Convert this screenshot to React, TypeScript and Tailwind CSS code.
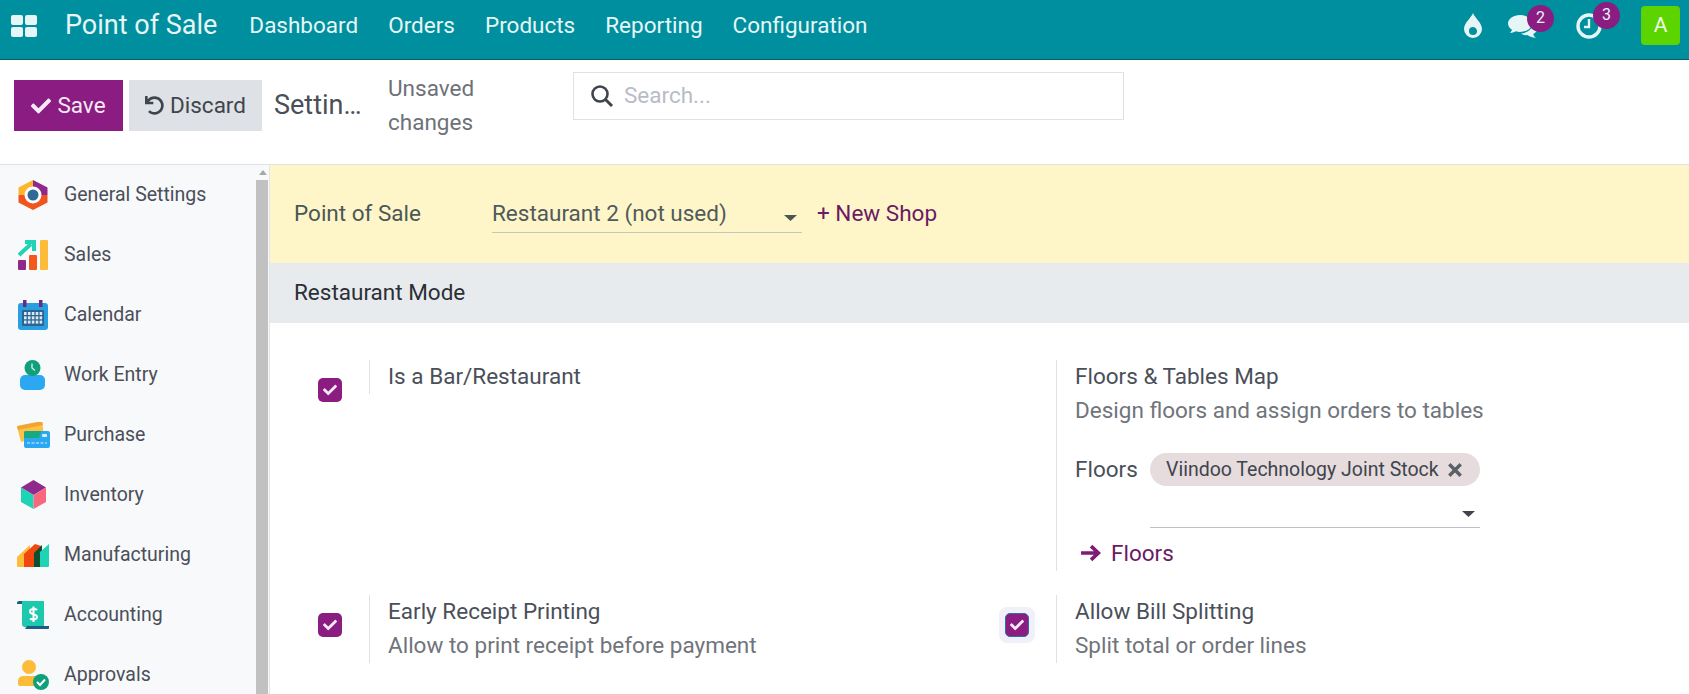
import React from "react";
import { FaCheck } from "react-icons/fa";

const font = { fontFamily: 'Roboto, "Liberation Sans", sans-serif' };

function Hex() {
  return (
    <svg width="30" height="32" viewBox="0 0 30 32">
      <path d="M15 1 L29.5 8.5 L29.5 16 L15 16 Z" fill="#8f2a8c" />
      <path d="M15 1 L0.5 8.5 L0.5 16 L15 16 Z" fill="#fdb72e" />
      <path d="M0.5 16 L0.5 23.5 L15 31 L29.5 23.5 L29.5 16 Z" fill="#f0541f" />
      <circle cx="15" cy="16" r="8.5" fill="#fff" />
      <circle cx="15" cy="16" r="5.5" fill="#2d6a96" />
    </svg>
  );
}
function SalesI() {
  return (
    <svg width="30" height="30" viewBox="0 0 30 30">
      <rect x="0" y="20" width="8" height="10" rx="1" fill="#8f2a8c" />
      <rect x="11" y="15" width="8" height="15" rx="1" fill="#f4581f" />
      <rect x="22" y="0" width="8" height="30" rx="1" fill="#fdbb3a" />
      <path d="M1 15 L13 4" stroke="#1fd3b5" strokeWidth="4" />
      <path d="M7 0 H18 V11 L14 11 V4 H7 Z" fill="#1fd3b5" />
    </svg>
  );
}
function CalI() {
  return (
    <svg width="30" height="30" viewBox="0 0 30 30">
      <rect x="0" y="3" width="30" height="27" rx="3" fill="#2a9fe0" />
      <rect x="4" y="10" width="22" height="16" rx="1" fill="#2a6394" />
      {[0, 1, 2, 3, 4].map((c) =>
        [0, 1, 2].map((r) => <rect key={c + "-" + r} x={6 + c * 3.9} y={12 + r * 4.3} width="2.6" height="3" fill="#dbeaf5" />)
      )}
      <rect x="5" y="0" width="3.5" height="7" fill="#6d2a85" />
      <rect x="21" y="0" width="3.5" height="7" fill="#6d2a85" />
    </svg>
  );
}
function WorkI() {
  return (
    <svg width="26" height="30" viewBox="0 0 26 30">
      <rect x="0" y="15" width="25" height="15" rx="5" fill="#2aa8f2" />
      <circle cx="12.5" cy="8" r="8" fill="#0fa07a" />
      <path d="M12 3.5 V8 L15 10.5" stroke="#cdeee4" strokeWidth="1.4" fill="none" />
    </svg>
  );
}
function PurchI() {
  return (
    <svg width="33" height="27" viewBox="0 0 33 27">
      <path d="M0 5 L25 0 L27 12 L4 20 Z" fill="#fdc14a" />
      <path d="M0 4 L25 -1 L26 3 L1 8 Z" fill="#f2a52e" />
      <rect x="7" y="9" width="26" height="17" rx="2" fill="#2aa8f2" />
      <path d="M7 11 a2 2 0 0 1 2 -2 H24 L22 16 H7 Z" fill="#17a97f" />
      <rect x="25" y="12" width="5" height="3" rx="1" fill="#dbeef9" />
      <path d="M10 21 H30" stroke="#dbeef9" strokeWidth="1.2" strokeDasharray="3 1.5" />
    </svg>
  );
}
function InvI() {
  return (
    <svg width="27" height="30" viewBox="0 0 27 30">
      <path d="M13.5 0 L26 7.5 L13.5 15 L1 7.5 Z" fill="#8f2a8c" />
      <path d="M1 7.5 L13.5 15 V29 L1 22 Z" fill="#1fd3b5" />
      <path d="M26 7.5 L13.5 15 V29 L26 22 Z" fill="#f7687f" />
    </svg>
  );
}
function ManI() {
  return (
    <svg width="32" height="23" viewBox="0 0 32 23">
      <path d="M0 13 L13 1 V23 H1 a1 1 0 0 1 -1 -1 Z" fill="#fdbb3a" />
      <path d="M7 10 L18 0 L24 2 V23 H7 Z" fill="#f2480f" />
      <path d="M17 9 L25 1 V23 H17 Z" fill="#0d4f34" />
      <path d="M23 8 L32 0 V22 a1 1 0 0 1 -1 1 H23 Z" fill="#1fd3b5" />
    </svg>
  );
}
function AccI() {
  return (
    <svg width="32" height="30" viewBox="0 0 32 30">
      <path d="M0 3 a2 2 0 0 1 2 -2 H8 V4 H0 Z" fill="#225a88" />
      <path d="M5 1 H27 V27 H8 a3 3 0 0 1 -3 -3 Z" fill="#1cc9ad" />
      <path d="M10 26 H32 V28 a1 1 0 0 1 -1 1 H8 Z" fill="#225a88" />
      <path d="M20 10 C18.5 8.5 13 8.5 13 11.5 C13 15 20 13.5 20 17 C20 20 14.5 20 13 18.5 M16.5 6.5 V22" stroke="#fff" strokeWidth="2" fill="none" />
    </svg>
  );
}
function AppI() {
  return (
    <svg width="31" height="30" viewBox="0 0 31 30">
      <circle cx="11" cy="7" r="7" fill="#fdbb3a" />
      <path d="M0 21 a5 5 0 0 1 5 -5 H17 a5 5 0 0 1 5 5 V26 H2 a2 2 0 0 1 -2 -2 Z" fill="#fdbb3a" />
      <circle cx="23" cy="22" r="8" fill="#0fa07a" />
      <path d="M19 22 L22 25 L27 19.5" stroke="#fff" strokeWidth="2" fill="none" />
    </svg>
  );
}

const items: [string, React.ReactNode][] = [
  ["General Settings", <Hex />],
  ["Sales", <SalesI />],
  ["Calendar", <CalI />],
  ["Work Entry", <WorkI />],
  ["Purchase", <PurchI />],
  ["Inventory", <InvI />],
  ["Manufacturing", <ManI />],
  ["Accounting", <AccI />],
  ["Approvals", <AppI />],
];

function Check({ halo }: { halo?: boolean }) {
  return (
    <div className={halo ? "flex h-9 w-9 items-center justify-center rounded-lg bg-[#f1f0fa]" : "flex h-9 w-9 items-center justify-center"}>
      <div className={halo ? "flex h-6 w-6 items-center justify-center rounded-[5px] border border-[#2f6f9f] bg-[#8a1c82]" : "flex h-6 w-6 items-center justify-center rounded-[5px] bg-[#8a1c82]"}>
        <FaCheck className="text-[14px] text-[#f6eaf5]" />
      </div>
    </div>
  );
}

function Caret({ color }: { color: string }) {
  return (
    <svg width="13" height="6" viewBox="0 0 13 6">
      <path d="M0 0 H13 L6.5 6 Z" fill={color} />
    </svg>
  );
}

function ChatIcon() {
  return (
    <svg width="30" height="26" viewBox="0 0 30 26">
      <path d="M12 2 C5.5 2 0 5.8 0 10.5 C0 13 1.6 15.3 4 16.8 C3.6 18 2.8 19.2 2 20 C4.6 19.8 6.6 18.9 8 18.2 C9.4 18.7 10.6 19 12 19 C18.6 19 24 15.2 24 10.5 C24 5.8 18.6 2 12 2 Z" fill="#e6f6f6" />
      <path d="M24.5 11 C25 15 20.5 20 13 20.6 C15 22 17.5 22.5 19.5 22 C21 23.3 24 24.6 28 25 C26.5 24 25.6 22.8 25.3 21 C28 19.5 29.5 17.5 29.5 15 C29.5 13 27.5 11.5 24.5 11 Z" fill="#e6f6f6" />
    </svg>
  );
}

export default function App() {
  return (
    <div className="flex h-[694px] w-[1689px] flex-col overflow-hidden bg-white text-[#4a4f59]" style={font}>
      <header className="relative flex h-[60px] shrink-0 items-center border-b border-[#0a5d65] bg-[#008f9f] pb-[8px] text-[#e6f6f6]">
        <div className="ml-[11px] grid w-[26px] grid-cols-2 gap-[2px]">
          <div className="h-[10px] rounded-[2px] bg-[#e6f6f6]" />
          <div className="h-[10px] rounded-[2px] bg-[#e6f6f6]" />
          <div className="h-[10px] rounded-[2px] bg-[#e6f6f6]" />
          <div className="h-[10px] rounded-[2px] bg-[#e6f6f6]" />
        </div>
        <div className="ml-[28px] text-[27px]">Point of Sale</div>
        <nav className="ml-[32px] flex gap-[30px] text-[22.5px]">
          <span>Dashboard</span>
          <span>Orders</span>
          <span>Products</span>
          <span>Reporting</span>
          <span>Configuration</span>
        </nav>
        <div className="ml-auto flex items-center">
          <svg width="18" height="25" viewBox="0 0 18 25" className="mr-[26px]">
            <path fillRule="evenodd" d="M9 0 C11 5 18 10 18 16 A9 9 0 0 1 0 16 C0 10 7 5 9 0 Z M9 14 A4 4 0 0 0 5 18 A4 4 0 0 0 13 18 C13 16 11 14 9 14 Z" fill="#e6f6f6" />
          </svg>
          <div className="relative mr-[38px] h-[26px] w-[30px]">
            <ChatIcon />
            <div className="absolute left-[19px] top-[-8px] flex h-[27px] w-[27px] items-center justify-center rounded-full bg-[#8a1c82] text-[16px]">2</div>
          </div>
          <div className="relative mr-[39px] h-[26px] w-[26px]">
            <svg width="26" height="26" viewBox="0 0 26 26">
              <circle cx="13" cy="13" r="11" stroke="#e6f6f6" strokeWidth="3.4" fill="none" />
              <path d="M13 6 V14 H8" stroke="#e6f6f6" strokeWidth="2.4" fill="none" />
            </svg>
            <div className="absolute left-[17px] top-[-11px] flex h-[27px] w-[27px] items-center justify-center rounded-full bg-[#8a1c82] text-[16px]">3</div>
          </div>
          <div className="mr-[9px] flex h-[39px] w-[39px] items-center justify-center rounded-[4px] bg-[#5cd400] text-[21px] text-[#f2fbe6]">A</div>
        </div>
      </header>

      <div className="flex h-[105px] shrink-0 items-start border-b border-[#dee2e6]">
        <button className="ml-[14px] mt-[20px] flex h-[51px] w-[109px] items-center justify-center gap-[6px] bg-[#8a1c82] text-[22.5px] text-[#f6eaf5]">
          <FaCheck className="text-[20px]" />
          Save
        </button>
        <button className="ml-[6px] mt-[20px] flex h-[51px] w-[133px] items-center justify-center gap-[6px] bg-[#dee1e5] text-[22.5px] text-[#3f444d]">
          <svg width="19" height="19" viewBox="0 0 512 512"><path fill="#3f444d" d="M212.3 224.3H12c-6.6 0-12-5.4-12-12V12C0 5.4 5.4 0 12 0h48c6.6 0 12 5.4 12 12v78.1C117.8 39.3 184.3 7.5 258.2 8c136.9 1 246.4 111.6 245.8 248.5C503.4 393 392.5 504 256 504c-64 0-122.3-24.3-166.2-64.2-5.1-4.6-5.3-12.6-.5-17.4l34-34c4.5-4.5 11.7-4.7 16.4-.5C170.8 415.3 211.6 432 256 432c97.3 0 176-78.7 176-176 0-97.3-78.7-176-176-176-58.5 0-110.3 28.5-142.3 72.3h98.3c6.6 0 12 5.4 12 12v48c0 6.6-5.4 12-12 12z" /></svg>
          Discard
        </button>
        <div className="ml-[12px] mt-[26px] w-[92px] overflow-hidden text-ellipsis whitespace-nowrap text-[27px] leading-[38px]">Settings</div>
        <div className="ml-[22px] mt-[11px] w-[90px] text-[22.5px] leading-[34px] text-[#6d7178]">Unsaved changes</div>
        <div className="ml-[95px] mt-[12px] flex h-[48px] w-[551px] items-center border border-[#dee2e6] pl-[16px] text-[22.5px] text-[#b8bcc6]">
          <svg width="24" height="24" viewBox="0 0 24 24" className="mr-[10px]">
            <circle cx="10" cy="10" r="7.5" stroke="#3f444d" strokeWidth="2.6" fill="none" />
            <path d="M15.5 15.5 L22 22" stroke="#3f444d" strokeWidth="3" />
          </svg>
          Search...
        </div>
      </div>

      <div className="flex min-h-0 flex-1">
        <aside className="flex w-[270px] shrink-0 overflow-hidden border-r border-[#e3e5e8] bg-[#f8f9fb]">
          <div className="w-[256px] shrink-0">
            {items.map(([name, icon]) => (
              <div key={name} className="flex h-[60px] items-center">
                <div className="flex w-[64px] shrink-0 justify-center pl-[2px]">{icon}</div>
                <span className="text-[19.5px]">{name}</span>
              </div>
            ))}
          </div>
          <div className="flex w-[13px] flex-col">
            <div className="flex h-[15px] items-center justify-center">
              <svg width="8" height="5" viewBox="0 0 8 5"><path d="M4 0 L8 5 H0 Z" fill="#a8a8a8" /></svg>
            </div>
            <div className="w-[12px] flex-1 bg-[#c1c1c1]" />
          </div>
        </aside>

        <main className="min-w-0 flex-1">
          <div className="flex h-[98px] items-center bg-[#fef6c9] pl-[24px] text-[22.5px]">
            <span className="w-[198px] text-[#4b5757]">Point of Sale</span>
            <div className="flex h-[38px] w-[310px] items-center justify-between border-b border-[#c4c6c0] pr-[5px] text-[#505a5c]">
              <span>Restaurant 2 (not used)</span>
              <span className="mt-[8px]"><Caret color="#4b5757" /></span>
            </div>
            <span className="ml-[15px] text-[#6b1a64]">+ New Shop</span>
          </div>
          <div className="flex h-[60px] items-center bg-[#e8ebee] pl-[24px] text-[22.5px] text-[#2b2f36]">Restaurant Mode</div>

          <div className="grid grid-cols-[786px_1fr] pt-[37px]">
            <div className="flex h-[211px] items-start">
              <div className="ml-[42px] mt-[12px] w-[57px]"><Check /></div>
              <div className="flex h-[34px] items-start border-l border-[#dee2e6] pl-[18px] text-[22.5px] leading-[32px]">Is a Bar/Restaurant</div>
            </div>
            <div className="flex">
              <div className="h-[211px] border-l border-[#dee2e6] pl-[18px]">
                <div className="text-[22.5px] leading-[32px]">Floors &amp; Tables Map</div>
                <div className="mt-[2px] text-[22.5px] leading-[32px] text-[#70747b]">Design floors and assign orders to tables</div>
                <div className="mt-[27px] flex">
                  <span className="w-[75px] text-[22.5px] leading-[33px]">Floors</span>
                  <div className="w-[330px]">
                    <div className="flex h-[33px] items-center justify-between rounded-full bg-[#e6dcde] pl-[16px] pr-[17px] text-[19.5px] text-[#40444c]">
                      <span>Viindoo Technology Joint Stock</span>
                      <svg width="16" height="16" viewBox="0 0 14 14"><path d="M2 2 L12 12 M12 2 L2 12" stroke="#5b6068" strokeWidth="3" /></svg>
                    </div>
                    <div className="flex h-[42px] items-center justify-end border-b border-[#bdc0c5] pr-[5px] pt-[14px]">
                      <Caret color="#40444c" />
                    </div>
                  </div>
                </div>
                <div className="mt-[9px] flex items-center pl-[5px] text-[22.5px] leading-[32px] text-[#6b1a64]">
                  <svg width="21" height="18" viewBox="0 0 20 16" className="mr-[10px]"><path d="M1 8 H17 M10.5 1.5 L17.5 8 L10.5 14.5" stroke="#7f1a76" strokeWidth="3.4" fill="none" /></svg>
                  Floors
                </div>
              </div>
            </div>
            <div className="mt-[24px] flex h-[68px] items-start">
              <div className="ml-[42px] mt-[12px] w-[57px]"><Check /></div>
              <div className="h-[68px] border-l border-[#dee2e6] pl-[18px] text-[22.5px] leading-[32px]">
                <div>Early Receipt Printing</div>
                <div className="mt-[2px] text-[#70747b]">Allow to print receipt before payment</div>
              </div>
            </div>
            <div className="relative mt-[24px] h-[68px] border-l border-[#dee2e6] pl-[18px] text-[22.5px] leading-[32px]">
              <div className="absolute left-[-58px] top-[12px]"><Check halo /></div>
              <div>Allow Bill Splitting</div>
              <div className="mt-[2px] text-[#70747b]">Split total or order lines</div>
            </div>
          </div>
        </main>
      </div>
    </div>
  );
}
